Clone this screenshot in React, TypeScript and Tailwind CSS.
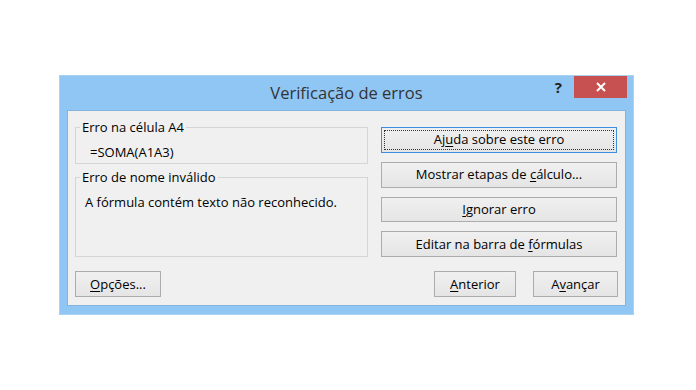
import React from "react";

const font = { fontFamily: '"Open Sans", "Noto Sans", "Liberation Sans", sans-serif' };

function Btn({
  children,
  className = "",
  focused = false,
}: {
  children: React.ReactNode;
  className?: string;
  focused?: boolean;
}) {
  return (
    <div
      className={
        "relative flex items-center justify-center h-[26px] border bg-gradient-to-b from-[#f0f0f0] to-[#e5e5e5] text-[13px] text-black " +
        (focused ? "border-[#3c8fe0] " : "border-[#acacac] ") +
        className
      }
    >
      {focused && (
        <span className="absolute inset-[2px] border border-dotted border-[#333]" />
      )}
      <span className="relative leading-none">{children}</span>
    </div>
  );
}

function U({ children }: { children: React.ReactNode }) {
  return <span className="underline underline-offset-2">{children}</span>;
}

function Group({
  title,
  children,
  className = "",
}: {
  title: string;
  children: React.ReactNode;
  className?: string;
}) {
  return (
    <fieldset className={"border border-[#d5d5d5] " + className}>
      <legend className="ml-[4px] px-[2px] text-[13px] leading-[16px] text-black">
        {title}
      </legend>
      {children}
    </fieldset>
  );
}

export default function App() {
  return (
    <div className="w-[696px] h-[390px] bg-white pt-[75px] pl-[59px]" style={font}>
      <div className="w-[575px] h-[240px] bg-[#8fc6f4] border border-[#a9d2f3] flex flex-col">
        {/* title bar */}
        <div className="h-[34px] grid grid-cols-[1fr_auto_1fr]">
          <div />
          <div className="flex items-center text-[16.5px] text-[#333] pt-[1px]">
            Verificação de erros
          </div>
          <div className="flex justify-end items-start pr-[6px]">
            <span className="mt-[4px] mr-[12px] text-[15px] font-bold text-[#222] leading-none">
              ?
            </span>
            <div className="w-[53px] h-[22px] bg-[#c75050] flex items-center justify-center">
              <svg width="10" height="10" viewBox="0 0 10 10">
                <path d="M1 1 L9 9 M9 1 L1 9" stroke="white" strokeWidth="2" />
              </svg>
            </div>
          </div>
        </div>
        {/* client */}
        <div className="mx-[7px] h-[196px] bg-[#f0f0f0] border border-[#83b4e0] flex flex-col pt-[8px] px-[7px]">
          <div className="flex gap-[13px] h-[138px]">
            <div className="w-[293px] flex flex-col gap-[5px]">
              <Group title="Erro na célula A4" className="h-[45px]">
                <div className="pl-[14px] pt-[9px] text-[13px] leading-[16px] text-black">
                  =SOMA(A1A3)
                </div>
              </Group>
              <Group title="Erro de nome inválido" className="h-[88px]">
                <div className="pl-[9px] pt-[9px] text-[13px] leading-[16px] text-black">
                  A fórmula contém texto não reconhecido.
                </div>
              </Group>
            </div>
            <div className="w-[236px] flex flex-col gap-[9px] pt-[8px]">
              <Btn focused>
                Aj<U>u</U>da sobre este erro
              </Btn>
              <Btn>
                Mostrar etapas de <U>c</U>álculo...
              </Btn>
              <Btn>
                <U>I</U>gnorar erro
              </Btn>
              <Btn>
                Editar na barra de <U>f</U>órmulas
              </Btn>
            </div>
          </div>
          <div className="mt-[14px] flex">
            <Btn className="w-[86px]">
              <U>O</U>pções...
            </Btn>
            <div className="flex-1" />
            <Btn className="w-[82px]">
              <U>A</U>nterior
            </Btn>
            <Btn className="w-[85px] ml-[17px]">
              A<U>v</U>ançar
            </Btn>
          </div>
        </div>
      </div>
    </div>
  );
}
